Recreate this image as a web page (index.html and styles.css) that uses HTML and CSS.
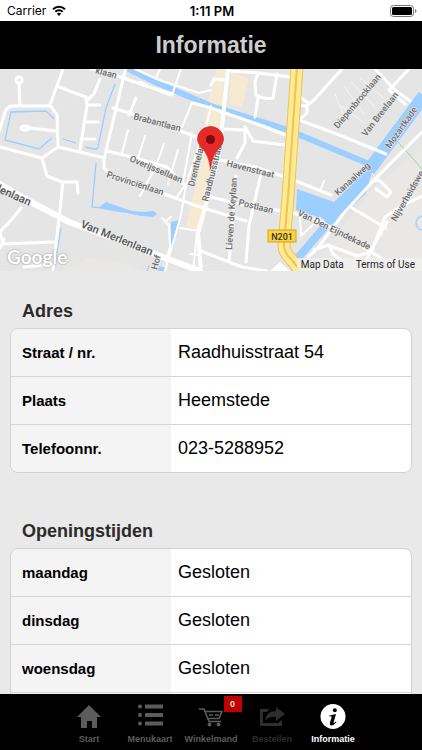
FILE: index.html
```html
<!DOCTYPE html>
<html lang="nl">
  <head>
    <meta charset="UTF-8" />
    <meta name="viewport" content="width=device-width, initial-scale=1.0" />
    <title>Informatie</title>
    <link rel="stylesheet" href="styles.css">
  </head>
  <body>
    <div class="statusbar">
      <div class="carrier">
        <span>Carrier</span>
        <svg width="14" height="11" viewBox="0 0 14 11" fill="none" stroke="#000" stroke-width="2">
          <path d="M1 4.2a8.6 8.6 0 0 1 12 0" />
          <path d="M3.3 6.8a5.2 5.2 0 0 1 7.4 0" />
          <path d="M7 11L4.9 8.7a3 3 0 0 1 4.2 0z" fill="#000" stroke="none" />
        </svg>
      </div>
      <div class="clock">1:11 PM</div>
      <div class="battery">
        <svg width="27" height="12" viewBox="0 0 27 12">
          <rect x="0.5" y="0.5" width="23" height="11" rx="3" fill="#fff" stroke="#777" />
          <rect x="2" y="2" width="20" height="8" rx="1.5" fill="#000" />
          <path d="M25 4v4q1.500-.5 1.500-2t-1.500-2z" fill="#777" />
        </svg>
      </div>
    </div>

    <header class="header">
      <h1>Informatie</h1>
    </header>

    <main class="content">
      <div class="map">
        <svg class="map-canvas" viewBox="0 69 422 202" preserveAspectRatio="xMidYMid slice" role="img" aria-label="Raadhuisstraat 54, Heemstede">
          <rect y="69" width="422" height="202" fill="#e5e5e5" />
          <path d="M60 271l30-13 40 7 16 6zM422 150l-42 30-40 50-30 41h112z" fill="#e9e8e7" />

          <!-- shopping area -->
          <g fill="#f7ead3">
            <path d="M217 69h9l-4 24 5 1-7 50-10 52-8 35-16-5 12-50 9-70z" />
            <path d="M231 72l18 7-7 28-13-4z" />
          </g>

          <!-- water -->
          <g fill="none" stroke="#9cceff">
            <path d="M125 67l30 15 56 24 77 24 86 36" stroke-width="6" />
            <path d="M424 96L369 170l-35 46-37 43" stroke-width="8" />
            <path d="M424 96L369 170" stroke-width="13" />
            <g stroke-width="1.300">
              <path d="M54 119l-8-8-35 1-6 28 34 9 13-11" />
              <path d="M115 84l-9 24-8 39q-1 3-4 2l-9-2M63 139l13 4M96 163l-4 44 11 1M61 228l-7 43M147 271l2-5" />
              <circle cx="423" cy="223" r="7" />
            </g>
          </g>
          <g fill="#9cceff">
            <path d="M98 208l8-6 14 5 12 4 12 1 10-1 3 3-4 3-12-1-14-3-14-2z" />
            <path d="M297 189l37 13 40-38-8 29-31 31-14-6-25-8z" />
            <path d="M171 222l8-2-4 19-4 12zM159 266l6 2-1 3h-6z" />
          </g>
          <path d="M398 142l24 27" stroke="#9ed0a8" stroke-width="1" />

          <!-- streets -->
          <g class="streets">
            <path d="M63 69L50 105l7 10 1 32-16 11-42-11M50 106H12q-5 1-7 6l-6 20M20 105l-1-21M57 131l-27-3M58 147l47 11" />
            <circle cx="19" cy="80" r="3" /><ellipse cx="25" cy="128" rx="4" ry="2" />
            <path d="M59 87l27 10 1 9-7 43M86 101l8-7 6-15M87 105h13M84 122h14M81 139h14" />
            <path d="M42 158l5 18 15 6 15 0 1 11M63 182l-4 36-6 53M21 208l-8 10L0 232l3 12 50-2M0 248l4-9M24 267l29-3" />
            <path d="M126 67l-22 92v9l8 7 88 32 46 14M113 108l26 8 66 24M107 151l25 6 35 10 18 18M129 115l7-17" />
            <path d="M118 76l25 9 30 9M193 103l18 5 52 18 25 10M140 82l10 5 21 8" />
            <path d="M211 85l3-6 11 1M228 71l31 2 31 4M259 73q-3 4-4 9l1 13q9 5 17 3l4-24M258 98l-3 19M222 129l23 1M245 127l8 14 32 4M245 131v12l-8 15" />
            <path d="M342 69l-28 31-8 6-16-2M307 106l0 7-11 10M300 97l8 6M302 121l40 15 44 18M375 69l20 21 15 11M409 69l-20 21 16 14" />
            <path d="M220 160l35 7 36 12 40 16M211 197l28 7 50 8 30 8 62 38M261 174l-12 52-3 36M236 176l-7 86M198 250l44 17 25 4" />
            <path d="M422 132L374 180 343 214 317 249 308 257M374 181l5-1 12 12-4 5-11-8M352 208l34 20M387 222l-17 30-9 19M314 250l14-5 29 11 14-4 14-35 13-9 24-12M329 245l4 9 11 8" />
            <path d="M228 69l-5 48-4 38-13 49-8 28 3 39" class="main-street" />
          </g>
          <g class="streets lanes">
            <path d="M90 69l30 8M135 69l24 11 40 13 12-3M156 78l4-9M173 92l8-23M192 103l-10 24M211 106l-7 30" />
            <path d="M128 130l-6 23M145 136l-8 25M164 144l-8 22-16 30M178 150l-10 34M192 133l-9 50M185 185l-8 12" />
            <path d="M204 130l-18 55-5 30-16 56M180 228l20 3M197 232l-4 39M160 252M162 218l7 7 1 21-4 15M165 222l6-5M190 254l10 1M321 189l3-8M320 218l-19 18-1-20" />
          </g>
          <path d="M335 94l10 24M344 86l20 28M351 82l24 25M360 78l26 22M340 105l24 18" stroke="#f5f5f5" />
          <path d="M-4 182l35 20 38 20 50 18 41 16 40 15" class="avenue" />

          <!-- N201 -->
          <path d="M297 67l-4 58-5 72-4 48q0 8 7 14l12 15" class="highway-edge" />
          <path d="M297 67l-4 58-5 72-4 48q0 8 7 14l12 15" class="highway" />
          <path d="M297 67l-4 58-5 72-4 48q0 8 7 14l12 15" class="highway-line" />
          <path d="M270 271l10-9 10 9z" fill="#fff" />
          <rect x="268" y="230" width="28" height="12" fill="#fdd33c" stroke="#cda518" />
          <text x="282" y="240" class="road-number">N201</text>

          <g class="labels">
            <text transform="translate(95 73) rotate(15)">klaan</text>
            <text transform="translate(133 119) rotate(15)">Brabantlaan</text>
            <text transform="translate(129 161) rotate(23)">Overijssellaan</text>
            <text transform="translate(106 177) rotate(18)">Provinciënlaan</text>
            <text transform="translate(194 187) rotate(-76)">Drenthelaan</text>
            <text transform="translate(208 202) rotate(-76)">Raadhuisstraat</text>
            <text transform="translate(226 166) rotate(14)">Havenstraat</text>
            <text transform="translate(238 205) rotate(14)">Postlaan</text>
            <text transform="translate(232 250) rotate(-86)">Lieven de Keylaan</text>
            <text transform="translate(297 215) rotate(26)">Van Den Eijndekade</text>
            <text transform="translate(338 196) rotate(-42)">Kanaalweg</text>
            <text transform="translate(396 222) rotate(-60)">Nijverheidswe</text>
            <text transform="translate(338 129) rotate(-50)">Diepenbrocklaan</text>
            <text transform="translate(366 137) rotate(-52)">Van Breelaan</text>
            <text transform="translate(390 149) rotate(-55)">Mozartkade</text>
            <text transform="translate(157 270) rotate(-75)">Hof</text>
            <text transform="translate(80 227) rotate(22)" class="big">Van Merlenlaan</text>
            <text transform="translate(29 206) rotate(24)" class="big" text-anchor="end">lenlaan</text>
          </g>

          <path d="M210.500 169q-1-11-6-18-7-7-7-12a13 12.500 0 0 1 26 0q0 5-7 12-5 7-6 18z" fill="#e52a28" stroke="#b91f1f" stroke-width="0.600" />
          <circle cx="210.500" cy="139.500" r="4.500" fill="#7d0a10" />
        </svg>
        <span class="map-logo">Google</span>
        <div class="map-links">
          <a href="#">Map Data</a>
          <a href="#">Terms of Use</a>
        </div>
      </div>

      <section class="info-block">
        <h2>Adres</h2>
        <table class="info-table">
          <tr><th scope="row">Straat / nr.</th><td>Raadhuisstraat 54</td></tr>
          <tr><th scope="row">Plaats</th><td>Heemstede</td></tr>
          <tr><th scope="row">Telefoonnr.</th><td>023-5288952</td></tr>
        </table>
      </section>

      <section class="info-block">
        <h2>Openingstijden</h2>
        <table class="info-table">
          <tr><th scope="row">maandag</th><td>Gesloten</td></tr>
          <tr><th scope="row">dinsdag</th><td>Gesloten</td></tr>
          <tr><th scope="row">woensdag</th><td>Gesloten</td></tr>
          <tr><th scope="row"></th><td></td></tr>
        </table>
      </section>
    </main>

    <nav class="tabbar">
      <a href="#" class="tab">
        <svg width="26" height="26" viewBox="0 0 26 26" fill="currentColor">
          <path d="M13 1L25 13h-4v11h-5v-7h-5v7H5V13H1z" />
        </svg>
        <span>Start</span>
      </a>
      <a href="#" class="tab">
        <svg width="26" height="26" viewBox="0 0 26 26" fill="currentColor">
          <circle cx="3" cy="2.500" r="2" /><circle cx="3" cy="11" r="2" /><circle cx="3" cy="19.500" r="2" />
          <path d="M8 .5h18v4H8zM8 9h18v4H8zM8 17.500h18v4H8z" />
        </svg>
        <span>Menukaart</span>
      </a>
      <a href="#" class="tab">
        <svg width="26" height="26" viewBox="0 0 26 26" fill="none" stroke="currentColor" stroke-width="1.600">
          <path d="M1 5h5l5 12.500h12M7 7.500h17l-3 7H10" />
          <path d="M11 11h4M17 11h4" />
          <circle cx="11.500" cy="20.500" r="1.900" fill="currentColor" stroke="none" />
          <circle cx="20.500" cy="20.500" r="1.900" fill="currentColor" stroke="none" />
        </svg>
        <span>Winkelmand</span>
        <span class="badge">0</span>
      </a>
      <a href="#" class="tab disabled" aria-disabled="true">
        <svg width="26" height="26" viewBox="0 0 26 26" fill="currentColor">
          <path d="M10 5H1v17h22v-6l-3 2v1H4V8h4z" />
          <path d="M6 17q1-10 11-10V3l9 7-9 7v-4q-7-1-11 4z" />
        </svg>
        <span>Bestellen</span>
      </a>
      <a href="#" class="tab active" aria-current="page">
        <svg width="26" height="26" viewBox="0 0 26 26">
          <circle cx="13" cy="12.500" r="12.500" fill="#fff" />
          <circle cx="14.800" cy="6.300" r="2" fill="#000" />
          <path d="M9.500 11.500q3-1 6.500-1.500l-2.300 8q-.3 1.300.5.900l1.500-1.500.7.600q-2.600 3.500-5 3.500-2.200-.2-1.400-2.900l1.600-5.300q.3-1-.6-1l-1.600.1z" fill="#000" />
        </svg>
        <span>Informatie</span>
      </a>
    </nav>
  </body>
</html>
```
FILE: styles.css
```css
* {
  box-sizing: border-box;
}
body {
  display: flex;
  flex-direction: column;
  height: 100vh;
  margin: 0;
  background-color: #e9e9e9;
  color: #000;
  font-family: "Liberation Sans", Arial, sans-serif;
}
a {
  color: inherit;
  text-decoration: none;
}

/* top of the screen */
.statusbar {
  display: grid;
  grid-template-columns: 1fr auto 1fr;
  align-items: center;
  height: 21px;
  padding: 0 5px 0 7px;
  background-color: #fff;
  font-family: Inter, sans-serif;
  font-size: 12px;
}
.carrier {
  display: flex;
  align-items: center;
  gap: 6px;
}
.clock {
  font-size: 13px;
  font-weight: 600;
}
.battery {
  display: flex;
  justify-content: flex-end;
}
.header {
  display: flex;
  flex-shrink: 0;
  align-items: center;
  justify-content: center;
  height: 48px;
  background-color: #000;
}
.header h1 {
  margin: 0;
  color: #ccc;
  font-size: 23px;
  line-height: 26px;
}
.content {
  flex: 1;
  min-height: 0;
  overflow-y: auto;
  scrollbar-width: none;
}

/* map */
.map {
  position: relative;
  height: 202px;
  overflow: hidden;
}
.map-canvas {
  display: block;
  width: 100%;
  height: 100%;
}
.streets {
  fill: none;
  stroke: #fff;
  stroke-width: 3;
  stroke-linejoin: round;
  stroke-linecap: round;
}
.streets.lanes {
  stroke-width: 2;
}
.main-street {
  stroke-width: 4;
}
.avenue {
  fill: none;
  stroke: #fff;
  stroke-width: 6;
}
.highway-edge,
.highway,
.highway-line {
  fill: none;
  stroke: #e8c45c;
  stroke-width: 13;
}
.highway {
  stroke: #ffe991;
  stroke-width: 11;
}
.highway-line {
  stroke: #ecc556;
  stroke-width: 2;
}
.road-number {
  fill: #333;
  font: 500 9px Roboto, sans-serif;
  text-anchor: middle;
}
.labels text {
  fill: #6b6b6b;
  stroke: #eee;
  stroke-width: 1px;
  paint-order: stroke;
  font: 500 9px Roboto, sans-serif;
}
.labels .big {
  fill: #555;
  font-size: 11px;
}
.map-logo {
  position: absolute;
  bottom: 2px;
  left: 7px;
  color: #fff;
  font: 700 19px/24px Lato, sans-serif;
  text-shadow: 0 0 2px #999, 0 0 1px #aaa;
}
.map-links {
  position: absolute;
  right: 0;
  bottom: 0;
  display: flex;
  gap: 12px;
  padding: 0 7px 0 4px;
  background-color: rgba(240, 240, 240, 0.8);
  color: #222;
  font: 10px/13px Roboto, sans-serif;
}

/* address and opening hours */
.info-block {
  padding: 28px 10px 19px;
}
.info-block h2 {
  margin: 0 12px 5px;
  color: #2b2b2b;
  font-size: 18px;
  line-height: 24px;
}
.info-block + .info-block {
  padding-top: 27px;
}
.info-table {
  width: 100%;
  border: 1px solid #d2d2d2;
  border-radius: 8px;
  border-spacing: 0;
  overflow: hidden;
  table-layout: fixed;
}
.info-table th,
.info-table td {
  height: 48px;
  padding: 0 7px;
  border-bottom: 1px solid #d6d6d6;
  background-color: #fff;
  font-size: 18px;
  line-height: 46px;
  text-align: left;
  vertical-align: baseline;
}
.info-table th {
  width: 40%;
  padding-left: 11px;
  background-color: #f4f4f4;
  font-size: 15px;
}
.info-table tr:last-child th,
.info-table tr:last-child td {
  height: 47px;
  border-bottom: none;
}

/* bottom tabs */
.tabbar {
  display: flex;
  flex-shrink: 0;
  justify-content: center;
  height: 56px;
  background-color: #000;
}
.tab {
  position: relative;
  display: flex;
  flex-direction: column;
  align-items: center;
  gap: 4px;
  width: 61px;
  padding-top: 10px;
  color: #5c5c5c;
  font-size: 9px;
  font-weight: bold;
  line-height: 10px;
}
.tab.disabled {
  color: #2e2e2e;
}
.tab.active {
  color: #fff;
}
.badge {
  position: absolute;
  top: 2px;
  right: 0;
  width: 18px;
  background-color: #c00000;
  color: #ddd;
  line-height: 16px;
  text-align: center;
}
```
